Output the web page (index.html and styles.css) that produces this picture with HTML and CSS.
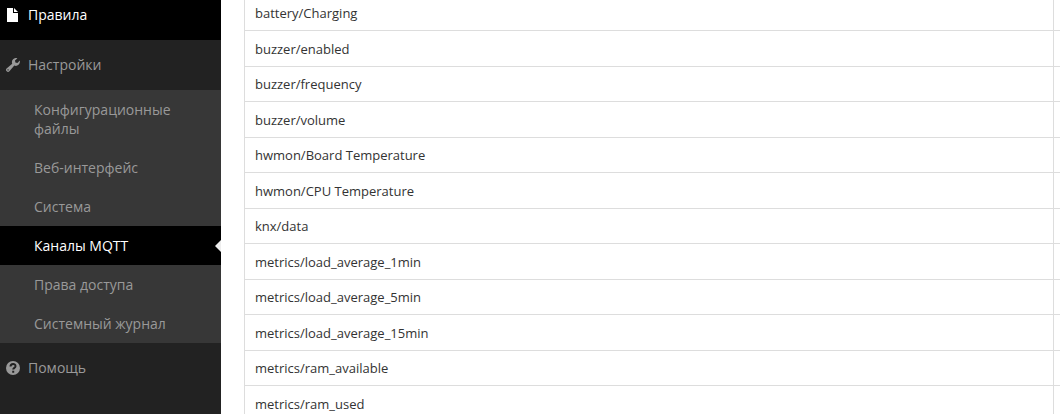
FILE: index.html
```html
<!DOCTYPE html>
<html lang="ru">
<head>
  <meta charset="UTF-8" />
  <meta name="viewport" content="width=device-width, initial-scale=1.0" />
  <title>Каналы MQTT</title>
  <link rel="stylesheet" href="styles.css">
</head>
<body>
  <div class="wrapper">
    <nav class="sidebar">
      <ul class="side-nav">
        <li class="current">
          <a href="#rules">
            <svg class="icon" viewBox="0 0 14 14"><path d="M1 0h6v5h5v9H1z M8 0l4 4H8z" /></svg>
            Правила
          </a>
        </li>
        <li>
          <a href="#settings">
            <svg class="icon" viewBox="0 0 14 14"><path fill-rule="evenodd" d="M13.800 2.600A4.200 4.200 0 0 1 8.300 7.600L3.400 13.200A1.800 1.800 0 0 1 .6 10.600L6.200 5.700A4.200 4.200 0 0 1 11.400 .2L9 2.600 9.400 4.600 11.400 5zM2 11.300a.6.6 0 1 0 .1 0z" /></svg>
            Настройки
          </a>
          <ul class="submenu">
            <li><a href="#configs">Конфигурационные файлы</a></li>
            <li><a href="#web-ui">Веб-интерфейс</a></li>
            <li><a href="#system">Система</a></li>
            <li class="active"><a href="#mqtt">Каналы MQTT</a></li>
            <li><a href="#access">Права доступа</a></li>
            <li><a href="#logs">Системный журнал</a></li>
          </ul>
        </li>
        <li>
          <a href="#help">
            <svg class="icon" viewBox="0 0 14 14">
              <circle cx="7" cy="7" r="7" />
              <path class="icon-mark" d="M4.500 5.500C4.600 2.200 9.600 2.200 9.500 5.200C9.500 7 7.200 6.800 7.200 8.600M7.200 9.800V11.800" />
            </svg>
            Помощь
          </a>
        </li>
      </ul>
    </nav>

    <main class="content">
      <table class="channels">
        <colgroup>
          <col>
          <col class="col-type">
        </colgroup>
        <tbody>
          <tr><td>battery/Charging</td><td></td></tr>
          <tr><td>buzzer/enabled</td><td></td></tr>
          <tr><td>buzzer/frequency</td><td></td></tr>
          <tr><td>buzzer/volume</td><td></td></tr>
          <tr><td>hwmon/Board Temperature</td><td></td></tr>
          <tr><td>hwmon/CPU Temperature</td><td></td></tr>
          <tr><td>knx/data</td><td></td></tr>
          <tr><td>metrics/load_average_1min</td><td></td></tr>
          <tr><td>metrics/load_average_5min</td><td></td></tr>
          <tr><td>metrics/load_average_15min</td><td></td></tr>
          <tr><td>metrics/ram_available</td><td></td></tr>
          <tr><td>metrics/ram_used</td><td></td></tr>
        </tbody>
      </table>
    </main>
  </div>
</body>
</html>
```
FILE: styles.css
```css
* {
  box-sizing: border-box;
}

body {
  margin: 0;
  height: 100vh;
  overflow: hidden;
  background: #fff;
  color: #333;
  font-family: "Open Sans", "Noto Sans", sans-serif;
  font-size: 13px;
  line-height: 18px;
}

.wrapper {
  display: flex;
  min-height: calc(100vh + 10px);
  /* page is scrolled a little past the top */
  margin-top: -10px;
}

/* Sidebar */
.sidebar {
  flex: none;
  width: 221px;
  background: #222;
  font-size: 14px;
  line-height: 19px;
}

.side-nav,
.submenu {
  margin: 0;
  padding: 0;
  list-style: none;
}

.side-nav a {
  display: flex;
  align-items: center;
  gap: 8px;
  padding: 15px 6px 16px;
  color: #999;
  text-decoration: none;
}

.side-nav .current > a,
.submenu .active a {
  background: #000;
  color: #fff;
}

.submenu {
  background: #373737;
}

.submenu a {
  padding: 10px 34px;
}

.submenu .active {
  position: relative;
}

.submenu .active::after {
  content: "";
  position: absolute;
  top: 14px;
  right: 0;
  border: 6px solid transparent;
  border-left-width: 0;
  border-right-color: #eee;
}

.icon {
  flex: none;
  width: 14px;
  height: 14px;
  fill: currentColor;
}

.icon-mark {
  fill: none;
  stroke: #222;
  stroke-width: 2;
}

/* Channel list */
.content {
  flex: 1;
  min-width: 0;
  overflow: hidden;
  padding: 5px 0 0 23px;
}

.channels {
  width: calc(100% + 120px);
  table-layout: fixed;
  border-collapse: collapse;
}

.col-type {
  width: 126px;
}

.channels td {
  height: 35px;
  padding: 8px 10px;
  border: 1px solid #ddd;
}

.channels tr:nth-child(even) td {
  height: 36px;
}
```
